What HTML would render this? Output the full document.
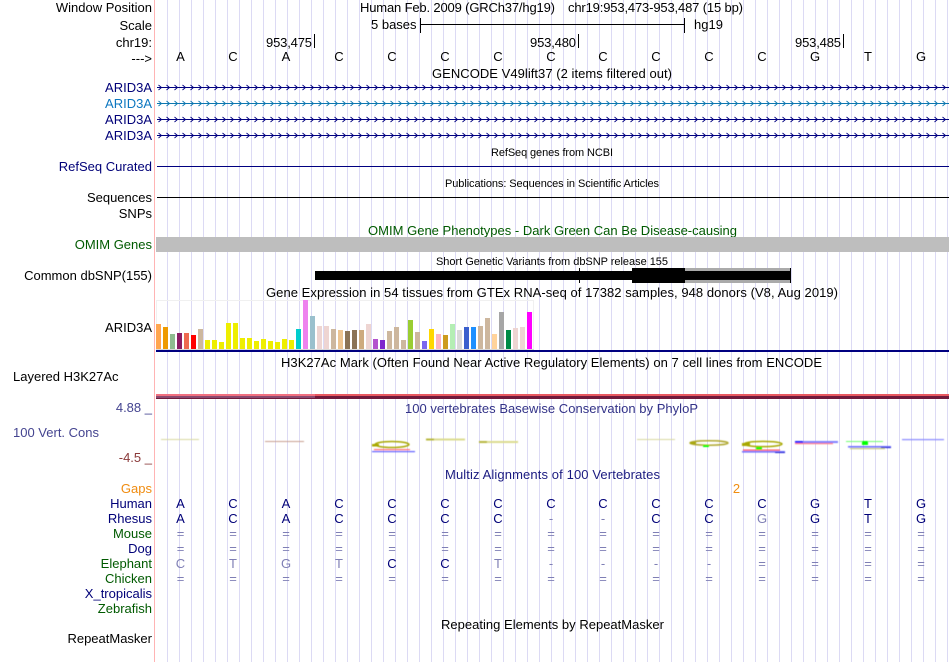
<!DOCTYPE html>
<html>
<head>
<meta charset="utf-8">
<title>Genome Browser</title>
<style>
html,body{margin:0;padding:0;background:#fff;width:950px;height:662px;overflow:hidden}
svg{display:block;font-family:"Liberation Sans",Arial,sans-serif;font-size:13px;fill:#000}
.r{text-anchor:end}
.m{text-anchor:middle}
.n{fill:#000078}
.g{fill:#005a00}
.f{fill:#7f7fb5}
.s{font-size:11px}
</style>
</head>
<body>
<svg xmlns="http://www.w3.org/2000/svg" width="950" height="662" viewBox="0 0 950 662">
<defs>
<pattern id="v" patternUnits="userSpaceOnUse" x="167" y="0" width="12" height="10"><rect x="0" y="0" width="1" height="10" fill="#dcdaf4"/></pattern>
<pattern id="a1" patternUnits="userSpaceOnUse" x="157" y="84" width="8" height="7"><path d="M1.5 1L4.5 3.5L1.5 6" fill="none" stroke="#000080" stroke-width=".9"/></pattern>
<pattern id="a2" patternUnits="userSpaceOnUse" x="157" y="100" width="8" height="7"><path d="M1.5 1L4.5 3.5L1.5 6" fill="none" stroke="#0c77b0" stroke-width=".9"/></pattern>
<pattern id="a3" patternUnits="userSpaceOnUse" x="157" y="116" width="8" height="7"><path d="M1.5 1L4.5 3.5L1.5 6" fill="none" stroke="#000080" stroke-width=".9"/></pattern>
<pattern id="a4" patternUnits="userSpaceOnUse" x="157" y="132" width="8" height="7"><path d="M1.5 1L4.5 3.5L1.5 6" fill="none" stroke="#000080" stroke-width=".9"/></pattern>
<filter id="b" x="-5%" y="-50%" width="110%" height="200%"><feGaussianBlur stdDeviation="0.45"/></filter>
</defs>
<rect width="950" height="662" fill="#fff"/>
<rect x="167" y="0" width="782" height="662" fill="url(#v)"/>
<rect x="154" y="0" width="1" height="662" fill="#ffb4b4"/>

<!-- header -->
<text class="r" x="152" y="12">Window Position</text>
<text class="r" x="152" y="30">Scale</text>
<text class="r" x="152" y="47">chr19:</text>
<text class="r" x="152" y="63">---&gt;</text>
<text x="360" y="12" textLength="195">Human Feb. 2009 (GRCh37/hg19)</text>
<text x="568" y="12" textLength="175">chr19:953,473-953,487 (15 bp)</text>
<text x="371" y="29">5 bases</text>
<text x="694" y="29">hg19</text>
<g shape-rendering="crispEdges">
<rect x="420" y="18" width="1" height="15"/><rect x="684" y="18" width="1" height="15"/><rect x="420" y="24" width="265" height="1"/>
<rect x="314" y="34" width="1" height="14"/><rect x="578" y="34" width="1" height="14"/><rect x="843" y="34" width="1" height="14"/>
</g>
<text x="266" y="47" textLength="46">953,475</text>
<text x="530" y="47" textLength="46">953,480</text>
<text x="795" y="47" textLength="46">953,485</text>
<text class="m" x="180.5 233 286 339 392 445 498 551 603 656 709 762 815 868 921" y="61">ACACCCCCCCCCGTG</text>
<text x="432" y="78" textLength="240">GENCODE V49lift37 (2 items filtered out)</text>

<!-- genes -->
<text class="r n" x="152" y="92">ARID3A</text>
<text class="r" x="152" y="108" style="fill:#0c77c0">ARID3A</text>
<text class="r n" x="152" y="124">ARID3A</text>
<text class="r n" x="152" y="140">ARID3A</text>
<g shape-rendering="crispEdges">
<rect x="157" y="87" width="792" height="1" fill="#000080"/>
<rect x="157" y="103" width="792" height="1" fill="#0c77b0"/>
<rect x="157" y="119" width="792" height="1" fill="#000080"/>
<rect x="157" y="135" width="792" height="1" fill="#000080"/>
<rect x="157" y="166" width="792" height="1" fill="#000080"/>
<rect x="157" y="197" width="792" height="1" fill="#000"/>
</g>
<rect x="157" y="84" width="792" height="7" fill="url(#a1)"/>
<rect x="157" y="100" width="792" height="7" fill="url(#a2)"/>
<rect x="157" y="116" width="792" height="7" fill="url(#a3)"/>
<rect x="157" y="132" width="792" height="7" fill="url(#a4)"/>

<text class="s" x="491" y="156" textLength="122">RefSeq genes from NCBI</text>
<text class="r n" x="152" y="171">RefSeq Curated</text>
<text class="s" x="445" y="187" textLength="214">Publications: Sequences in Scientific Articles</text>
<text class="r" x="152" y="202">Sequences</text>
<text class="r" x="152" y="218">SNPs</text>

<!-- OMIM -->
<text class="g" x="368" y="235" textLength="369">OMIM Gene Phenotypes - Dark Green Can Be Disease-causing</text>
<text class="r g" x="152" y="249">OMIM Genes</text>
<rect x="156" y="237" width="793" height="15" fill="#bebebe" shape-rendering="crispEdges"/>

<!-- dbSNP -->
<text class="s" x="436" y="265" textLength="232">Short Genetic Variants from dbSNP release 155</text>
<text class="r" x="152" y="280">Common dbSNP(155)</text>
<g shape-rendering="crispEdges">
<rect x="685" y="268" width="105" height="15" fill="#aaaaaa"/>
<rect x="315" y="271" width="475" height="9" fill="#000"/>
<rect x="632" y="268" width="53" height="15" fill="#000"/>
<rect x="790" y="268" width="1" height="15" fill="#000"/>
<rect x="579" y="268" width="1" height="15" fill="#000"/>
</g>

<!-- GTEx -->
<text x="266" y="297" textLength="572">Gene Expression in 54 tissues from GTEx RNA-seq of 17382 samples, 948 donors (V8, Aug 2019)</text>
<text class="r" x="152" y="332">ARID3A</text>
<g shape-rendering="crispEdges">
<rect x="156" y="300" width="378" height="1" fill="#f0f0f0"/>
<rect x="156" y="300" width="1" height="50" fill="#f0f0f0"/>
<rect x="533" y="300" width="1" height="50" fill="#f0f0f0"/>
<rect x="156" y="349" width="378" height="1" fill="#d8d8d8"/>
<rect x="156" y="324" width="5" height="25" fill="#FFA54F"/>
<rect x="163" y="327" width="5" height="22" fill="#EE9A00"/>
<rect x="170" y="334" width="5" height="15" fill="#8FBC8F"/>
<rect x="177" y="333" width="5" height="16" fill="#8B1C62"/>
<rect x="184" y="333" width="5" height="16" fill="#EE6A50"/>
<rect x="191" y="335" width="5" height="14" fill="#FF0000"/>
<rect x="198" y="329" width="5" height="20" fill="#CDB79E"/>
<rect x="205" y="340" width="5" height="9" fill="#EEEE00"/>
<rect x="212" y="340" width="5" height="9" fill="#EEEE00"/>
<rect x="219" y="342" width="5" height="7" fill="#EEEE00"/>
<rect x="226" y="323" width="5" height="26" fill="#EEEE00"/>
<rect x="233" y="323" width="5" height="26" fill="#EEEE00"/>
<rect x="240" y="338" width="5" height="11" fill="#EEEE00"/>
<rect x="247" y="338" width="5" height="11" fill="#EEEE00"/>
<rect x="254" y="341" width="5" height="8" fill="#EEEE00"/>
<rect x="261" y="339" width="5" height="10" fill="#EEEE00"/>
<rect x="268" y="341" width="5" height="8" fill="#EEEE00"/>
<rect x="275" y="342" width="5" height="7" fill="#EEEE00"/>
<rect x="282" y="339" width="5" height="10" fill="#EEEE00"/>
<rect x="289" y="340" width="5" height="9" fill="#EEEE00"/>
<rect x="296" y="329" width="5" height="20" fill="#00CDCD"/>
<rect x="303" y="300" width="5" height="49" fill="#EE82EE"/>
<rect x="310" y="316" width="5" height="33" fill="#9AC0CD"/>
<rect x="317" y="326" width="5" height="23" fill="#EED5D2"/>
<rect x="324" y="326" width="5" height="23" fill="#EED5D2"/>
<rect x="331" y="329" width="5" height="20" fill="#CDB79E"/>
<rect x="338" y="330" width="5" height="19" fill="#EEC591"/>
<rect x="345" y="331" width="5" height="18" fill="#8B7355"/>
<rect x="352" y="330" width="5" height="19" fill="#8B7355"/>
<rect x="359" y="330" width="5" height="19" fill="#CDAA7D"/>
<rect x="366" y="324" width="5" height="25" fill="#EED5D2"/>
<rect x="373" y="339" width="5" height="10" fill="#B452CD"/>
<rect x="380" y="340" width="5" height="9" fill="#7D26CD"/>
<rect x="387" y="331" width="5" height="18" fill="#CDB79E"/>
<rect x="394" y="327" width="5" height="22" fill="#CDB79E"/>
<rect x="401" y="340" width="5" height="9" fill="#CDB79E"/>
<rect x="408" y="320" width="5" height="29" fill="#9ACD32"/>
<rect x="415" y="332" width="5" height="17" fill="#CDB79E"/>
<rect x="422" y="341" width="5" height="8" fill="#7A67EE"/>
<rect x="429" y="329" width="5" height="20" fill="#FFD700"/>
<rect x="436" y="334" width="5" height="15" fill="#FFB6C1"/>
<rect x="443" y="335" width="5" height="14" fill="#CD9B1D"/>
<rect x="450" y="324" width="5" height="25" fill="#B4EEB4"/>
<rect x="457" y="330" width="5" height="19" fill="#D9D9D9"/>
<rect x="464" y="327" width="5" height="22" fill="#3A5FCD"/>
<rect x="471" y="327" width="5" height="22" fill="#1E90FF"/>
<rect x="478" y="326" width="5" height="23" fill="#CDB79E"/>
<rect x="485" y="318" width="5" height="31" fill="#CDB79E"/>
<rect x="492" y="334" width="5" height="15" fill="#FFD39B"/>
<rect x="499" y="312" width="5" height="37" fill="#A6A6A6"/>
<rect x="506" y="330" width="5" height="19" fill="#008B45"/>
<rect x="513" y="328" width="5" height="21" fill="#EED5D2"/>
<rect x="520" y="327" width="5" height="22" fill="#EED5D2"/>
<rect x="527" y="312" width="5" height="37" fill="#FF00FF"/>
<rect x="156" y="350" width="793" height="2" fill="#000080"/>
</g>

<!-- H3K27Ac -->
<text x="281" y="367" textLength="541">H3K27Ac Mark (Often Found Near Active Regulatory Elements) on 7 cell lines from ENCODE</text>
<text x="13" y="381">Layered H3K27Ac</text>
<g shape-rendering="crispEdges">
<rect x="156" y="394" width="793" height="2" fill="#f07080"/>
<rect x="156" y="396" width="793" height="3" fill="#701a3c"/>
<rect x="156" y="396" width="159" height="2" fill="#8a4a70"/>
<rect x="315" y="394" width="634" height="2" fill="#e85860"/>
</g>

<!-- Conservation -->
<text x="405" y="413" textLength="293" style="fill:#333388">100 vertebrates Basewise Conservation by PhyloP</text>
<text class="r" x="152" y="412" style="fill:#444490">4.88 _</text>
<text x="13" y="437" style="fill:#444490">100 Vert. Cons</text>
<text class="r" x="152" y="462" style="fill:#8b3a3a">-4.5 _</text>
<g filter="url(#b)">
<rect x="161" y="439" width="38" height="1" fill="#d8d8a0"/>
<rect x="265" y="441" width="39" height="1" fill="#c8a090"/>
<ellipse cx="392" cy="444.5" rx="17" ry="3" fill="none" stroke="#a8a800" stroke-width="1.5"/>
<rect x="372" y="444" width="7" height="2.5" fill="#a8a800"/>
<rect x="374" y="449" width="36" height="1.2" fill="#ff7070"/>
<rect x="372" y="451" width="43" height="1.2" fill="#6060ff"/>
<rect x="426" y="438.5" width="39" height="2" fill="#dcdc90"/>
<rect x="426" y="438.5" width="8" height="2" fill="#b8b840"/>
<rect x="479" y="441" width="39" height="2" fill="#dcdc90"/>
<rect x="479" y="441" width="8" height="2" fill="#b8b840"/>
<rect x="637" y="439" width="38" height="1" fill="#d8d8a0"/>
<ellipse cx="709" cy="443" rx="19" ry="2.2" fill="none" stroke="#b0a830" stroke-width="1.5"/>
<rect x="690" y="442" width="6" height="2" fill="#a8a800"/>
<rect x="703" y="445" width="6" height="2" fill="#00ff00"/>
<ellipse cx="763" cy="444" rx="19" ry="2.6" fill="none" stroke="#a8a800" stroke-width="1.5"/>
<rect x="742" y="443" width="8" height="3" fill="#a8a800"/>
<rect x="756" y="447" width="6" height="2.5" fill="#00ff00"/>
<rect x="743" y="449.5" width="37" height="1.2" fill="#ff5050"/>
<rect x="742" y="451" width="43" height="1.6" fill="#7070ff"/>
<rect x="775" y="452" width="10" height="1" fill="#0000d0"/>
<rect x="795" y="441" width="43" height="2" fill="#8080ff"/>
<rect x="795" y="441" width="8" height="2" fill="#2020ff"/>
<rect x="795" y="443" width="38" height="1.2" fill="#ff8080"/>
<rect x="846" y="441" width="37" height="1" fill="#70ff70"/>
<rect x="862" y="441" width="6" height="4" fill="#00ff00"/>
<rect x="848" y="446" width="43" height="1.6" fill="#7070ff"/>
<rect x="881" y="447" width="10" height="1" fill="#0000d0"/>
<rect x="850" y="448" width="35" height="1.2" fill="#c8c880"/>
<rect x="902" y="439" width="42" height="1.2" fill="#8888ff"/>
</g>

<!-- Multiz -->
<text x="445" y="479" textLength="215" style="fill:#1a1a80">Multiz Alignments of 100 Vertebrates</text>
<text class="r" x="152" y="493" style="fill:#f08c10">Gaps</text>
<text class="m" x="736.5" y="493" style="fill:#f08c10">2</text>
<text class="r n" x="152" y="508">Human</text>
<text class="r n" x="152" y="523">Rhesus</text>
<text class="r g" x="152" y="538">Mouse</text>
<text class="r n" x="152" y="553">Dog</text>
<text class="r g" x="152" y="568">Elephant</text>
<text class="r g" x="152" y="583">Chicken</text>
<text class="r n" x="152" y="598">X_tropicalis</text>
<text class="r g" x="152" y="613">Zebrafish</text>

<text class="m n" x="180.5 233 286 339 392 445 498 551 603 656 709 762 815 868 921" y="508">ACACCCCCCCCCGTG</text>
<text class="m n" x="180.5 233 286 339 392 445 498" y="523">ACACCCC</text>
<text class="m f" x="551 603" y="523">--</text>
<text class="m n" x="656 709" y="523">CC</text>
<text class="m f" x="762" y="523">G</text>
<text class="m n" x="815 868 921" y="523">GTG</text>
<text class="m f" x="180.5 233 286 339 392 445 498 551 603 656 709 762 815 868 921" y="538">===============</text>
<text class="m f" x="180.5 233 286 339 392 445 498 551 603 656 709 762 815 868 921" y="553">===============</text>
<text class="m f" x="180.5 233 286 339" y="568">CTGT</text>
<text class="m n" x="392 445" y="568">CC</text>
<text class="m f" x="498 551 603 656 709 762 815 868 921" y="568">T----====</text>
<text class="m f" x="180.5 233 286 339 392 445 498 551 603 656 709 762 815 868 921" y="583">===============</text>

<!-- RepeatMasker -->
<text x="441" y="629" textLength="223">Repeating Elements by RepeatMasker</text>
<text class="r" x="152" y="643">RepeatMasker</text>
</svg>
</body>
</html>
